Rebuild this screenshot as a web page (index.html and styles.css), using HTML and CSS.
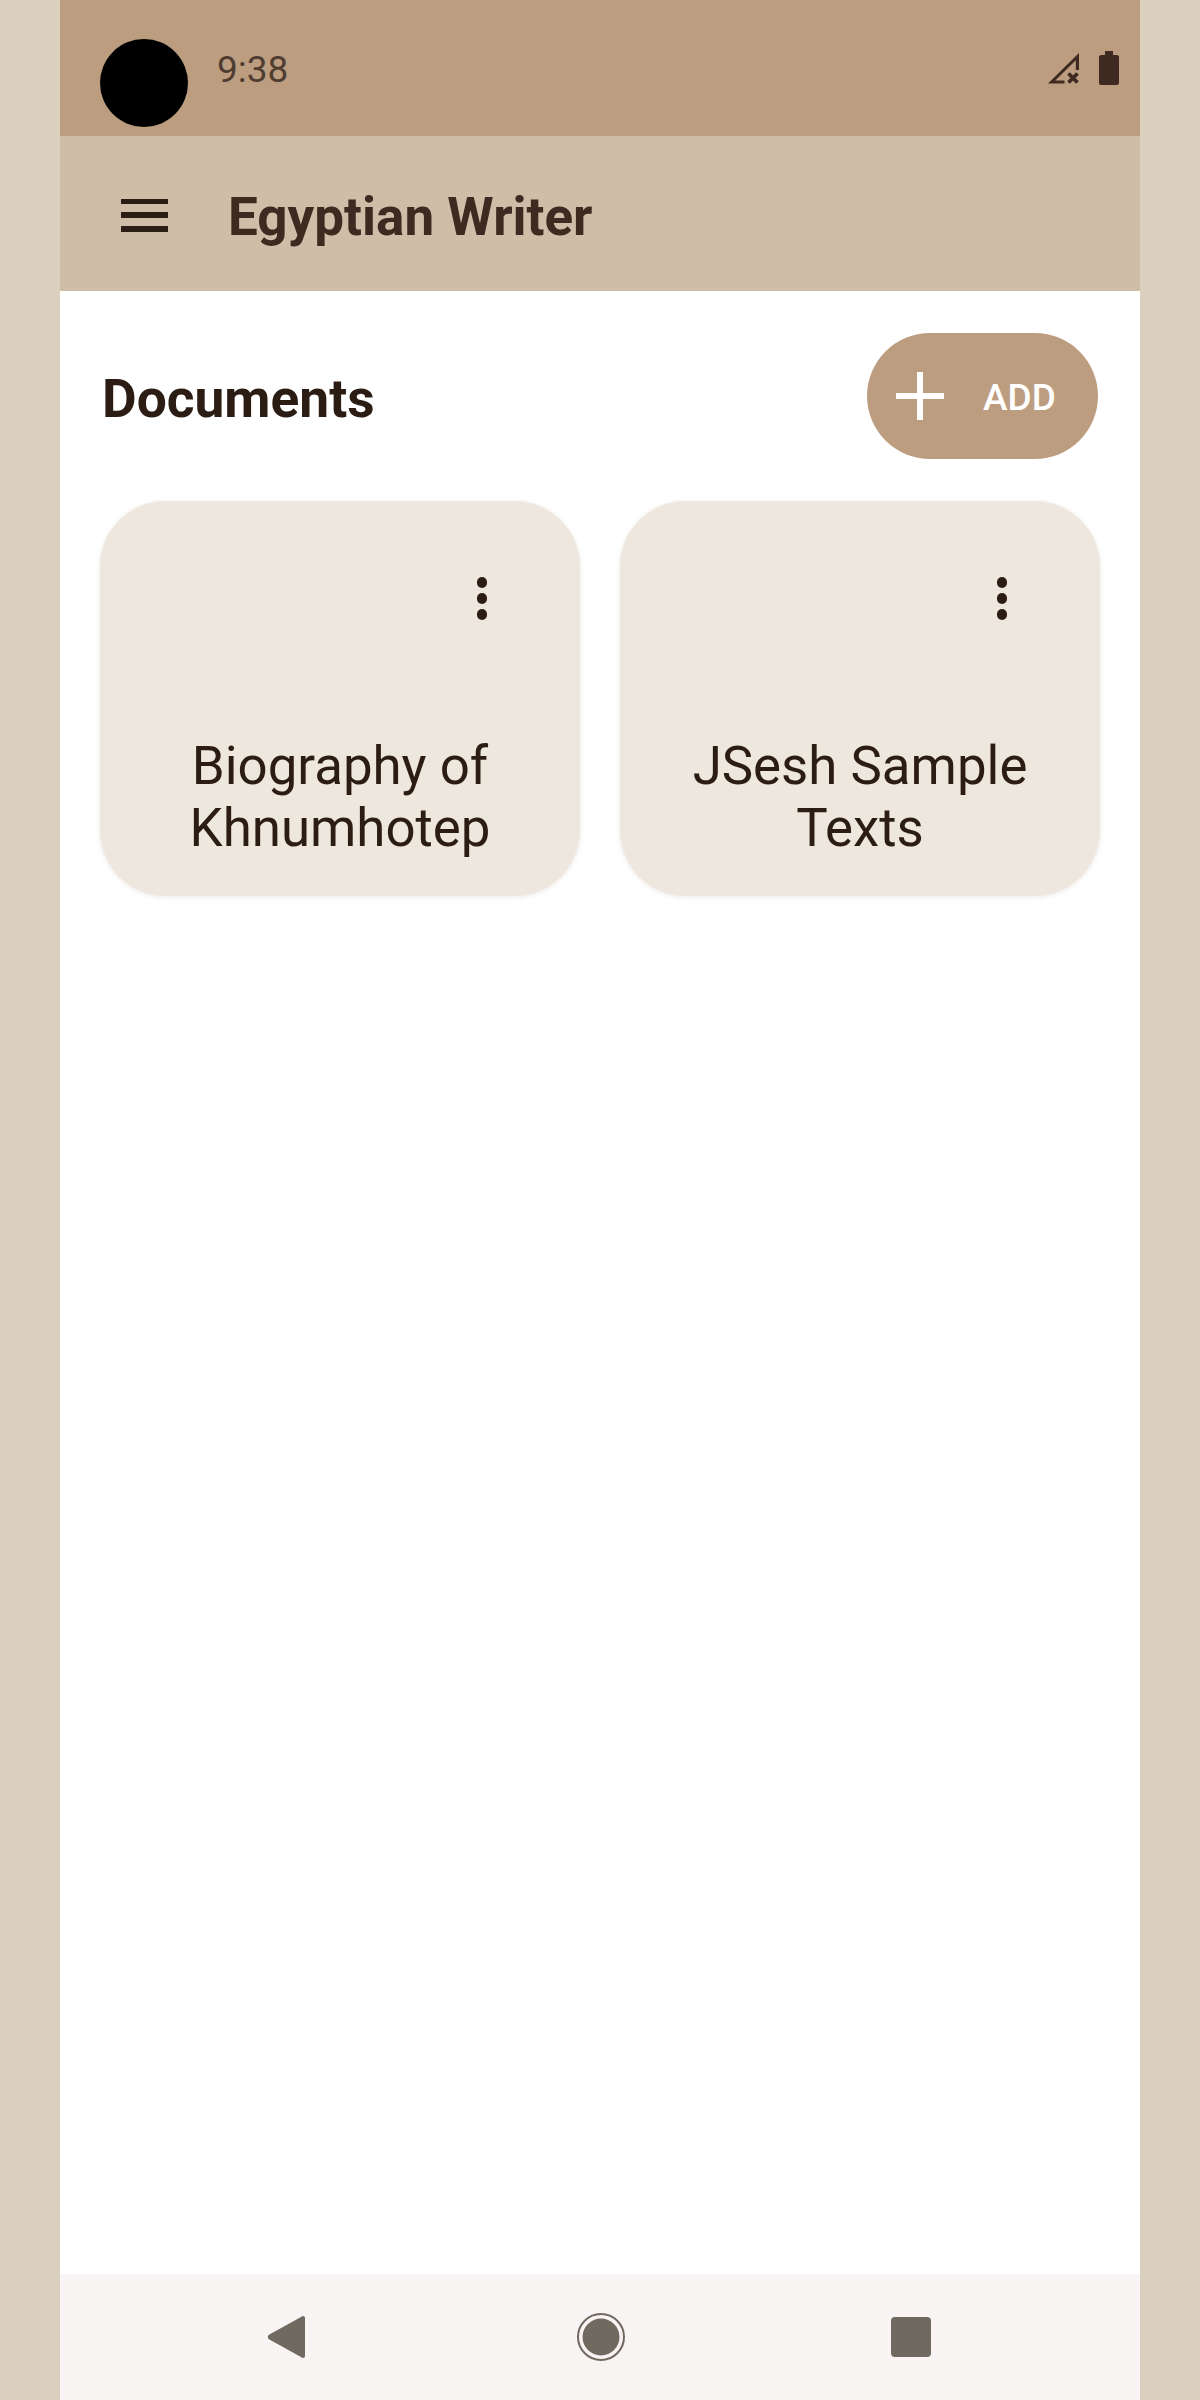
FILE: index.html
```html
<!DOCTYPE html>
<html lang="en">
<head>
<meta charset="utf-8">
<title>Egyptian Writer</title>
<link rel="stylesheet" href="styles.css">
</head>
<body>
<div class="phone">
  <header class="status">
    <span class="camera"></span>
    <span class="time">9:38</span>
    <span class="status-icons">
      <svg class="signal" width="32" height="32" viewBox="0 0 32 32" aria-hidden="true">
        <path d="M32 1 L1 31.5 H17.5 V28.4 H8.3 L28.8 8.2 V18 H32 Z" />
        <path d="M21.5 21.5 L30.5 30.5 M30.5 21.5 L21.5 30.5" class="signal-x"/>
      </svg>
      <svg class="battery" width="20" height="34" viewBox="0 0 20 34" aria-hidden="true">
        <path d="M6 0 H14 V4 H18 Q20 4 20 6 V32 Q20 34 18 34 H2 Q0 34 0 32 V6 Q0 4 2 4 H6 Z"/>
      </svg>
    </span>
  </header>
  <div class="appbar">
    <button class="menu-btn" aria-label="Menu"><span></span><span></span><span></span></button>
    <h1 class="app-title">Egyptian Writer</h1>
  </div>
  <main class="content">
    <div class="section-head">
      <h2 class="section-title">Documents</h2>
      <button class="add-btn">
        <svg width="48" height="48" viewBox="0 0 48 48" aria-hidden="true"><path d="M24 0 V48 M0 24 H48"/></svg>
        <span class="add-label">ADD</span>
      </button>
    </div>
    <div class="cards">
      <article class="card">
        <div class="kebab"><i></i><i></i><i></i></div>
        <div class="card-title">Biography of Khnumhotep</div>
      </article>
      <article class="card">
        <div class="kebab"><i></i><i></i><i></i></div>
        <div class="card-title">JSesh Sample Texts</div>
      </article>
    </div>
  </main>
  <nav class="navbar">
    <svg width="38" height="44" viewBox="0 0 38 44" aria-hidden="true"><path d="M36 1 Q38 1 38 3 V41 Q38 43 36 43 Q35 43 34 42 L1.5 24 Q0 22 1.5 20 L34 2 Q35 1 36 1 Z"/></svg>
    <svg width="48" height="48" viewBox="0 0 48 48" aria-hidden="true"><circle cx="24" cy="24" r="18.5"/><circle class="ring" cx="24" cy="24" r="23"/></svg>
    <svg class="recents" width="40" height="40" viewBox="0 0 40 40" aria-hidden="true"><rect width="40" height="40" rx="4"/></svg>
  </nav>
</div>
</body>
</html>
```
FILE: styles.css
```css
* { box-sizing: border-box; }
html, body { margin: 0; padding: 0; }
body {
  background: #dbd0bd;
  font-family: Roboto, "Liberation Sans", sans-serif;
  color: #2b1d14;
}
.phone {
  position: relative;
  width: 1080px;
  height: 2400px;
  margin: 0 60px;
  background: #fff;
  display: flex;
  flex-direction: column;
}
.status {
  height: 136px;
  flex: none;
  background: #bd9d80;
  display: flex;
  align-items: center;
  padding: 0 21px 0 157px;
  color: #3e2a20;
}
.camera {
  position: absolute;
  left: 40px;
  top: 39px;
  width: 88px;
  height: 88px;
  border-radius: 50%;
  background: #000;
}
.time { font-size: 37px; font-weight: 400; color: #503d31; padding-top: 2px; }
.status-icons {
  margin-left: auto;
  display: flex;
  align-items: center;
  gap: 20px;
}
.status-icons svg { display: block; fill: #3e2a20; }
.signal-x { fill: none; stroke: #3e2a20; stroke-width: 3.8; }
.appbar {
  height: 155px;
  flex: none;
  background: #cfbda8;
  display: flex;
  align-items: center;
  padding: 3px 0 0 61px;
}
.menu-btn {
  width: 47px;
  height: 33px;
  padding: 0;
  border: 0;
  background: none;
  display: flex;
  flex-direction: column;
  justify-content: space-between;
}
.menu-btn span { display: block; height: 5.5px; background: #2b1d14; }
.app-title {
  margin: 3px 0 0 60px;
  font-size: 53px;
  font-weight: 700;
  color: #3e2a20;
}
.content { flex: 1; padding: 42px 40px 0; }
.section-head {
  display: flex;
  align-items: center;
  justify-content: space-between;
  padding: 0 2px 0 2px;
  height: 126px;
}
.section-title { margin: 0; padding-top: 6px; font-size: 53.3px; font-weight: 700; color: #2b1d14; }
.add-btn {
  width: 231px;
  height: 126px;
  border: 0;
  padding: 0 0 0 29px;
  border-radius: 63px;
  background: #bd9d80;
  color: #fff;
  display: flex;
  align-items: center;
  gap: 39px;
  font: 500 37px Roboto, sans-serif;
}
.add-label { padding-top: 2px; }
.add-btn svg { display: block; fill: none; stroke: #fff; stroke-width: 6; }
.cards {
  display: grid;
  grid-template-columns: 480px 480px;
  column-gap: 40px;
  margin-top: 42px;
}
.card {
  height: 395px;
  border-radius: 66px;
  background: #eee7dd;
  box-shadow: 0 1px 5px rgba(90, 60, 40, .12);
  padding: 76px 0 0;
  display: flex;
  flex-direction: column;
  align-items: center;
}
.kebab {
  align-self: flex-end;
  margin-right: 93px;
  display: flex;
  flex-direction: column;
  gap: 5.5px;
}
.kebab i { display: block; width: 10.5px; height: 10.5px; border-radius: 50%; background: #2b1d14; }
.card-title {
  margin-top: 115px;
  width: 340px;
  font-size: 52.8px;
  line-height: 62px;
  text-align: center;
  color: #2b1d14;
}
.navbar {
  height: 126px;
  flex: none;
  background: #f8f4f3;
  display: flex;
  align-items: center;
  padding-left: 207px;
  gap: 272px;
}
.navbar svg { display: block; fill: #6f6960; }
.navbar .recents { margin-left: -6px; }
.ring { fill: none; stroke: #6f6960; stroke-width: 2; }
```
